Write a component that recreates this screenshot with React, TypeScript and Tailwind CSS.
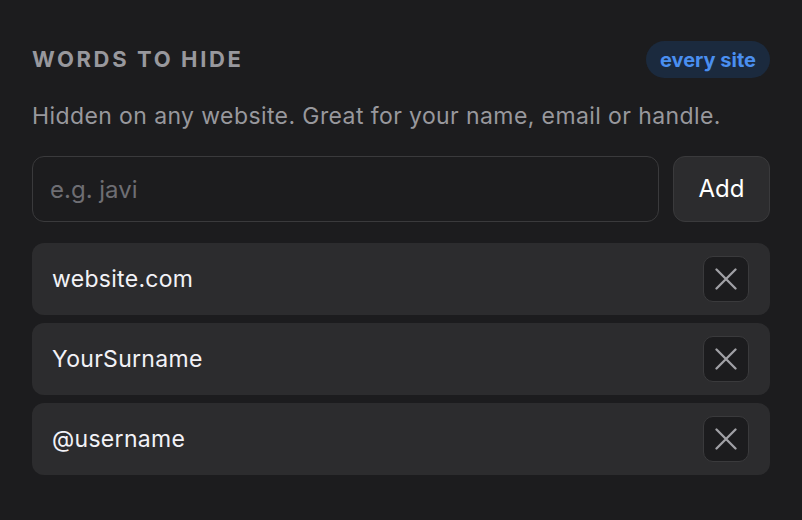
import React, { useState } from "react";

type Word = {
  id: number;
  text: string;
};

const initialWords: Word[] = [
  { id: 1, text: "website.com" },
  { id: 2, text: "YourSurname" },
  { id: 3, text: "@username" },
];

const CloseIcon = () => (
  <svg width="22" height="22" viewBox="0 0 22 22" fill="none">
    <path
      d="M1.5 1.5L20.5 20.5M20.5 1.5L1.5 20.5"
      stroke="#a1a1a6"
      strokeWidth="2.3"
      strokeLinecap="round"
    />
  </svg>
);

const App = () => {
  const [words, setWords] = useState<Word[]>(initialWords);
  const [draft, setDraft] = useState("");

  const addWord = () => {
    const text = draft.trim();
    if (!text) return;
    setWords([...words, { id: Date.now(), text }]);
    setDraft("");
  };

  const removeWord = (id: number) => {
    setWords(words.filter((w) => w.id !== id));
  };

  return (
    <main className="min-h-[520px] w-full bg-[#1c1c1e] px-8 pt-[41px] pb-10 font-['Inter','Liberation_Sans',sans-serif]">
      <div className="flex items-center justify-between">
        <h2 className="text-[22px] font-bold uppercase tracking-[0.12em] text-[#98989d]">
          Words to hide
        </h2>
        <span className="flex h-[37px] items-center rounded-full bg-[#1b2a3e] px-[14px] text-[20px] font-bold text-[#4a8ff0]">
          every site
        </span>
      </div>

      <p className="mt-[23px] text-[23px] leading-[30px] tracking-[0.4px] text-[#98989d]">
        Hidden on any website. Great for your name, email or handle.
      </p>

      <div className="mt-[25px] flex gap-[14px]">
        <input
          type="text"
          value={draft}
          onChange={(e) => setDraft(e.target.value)}
          onKeyDown={(e) => e.key === "Enter" && addWord()}
          placeholder="e.g. javi"
          className="h-[66px] flex-1 rounded-[12px] border-[1.5px] border-[#3a3a3c] bg-[#1c1c1e] px-[17px] text-[24px] text-white outline-none placeholder:text-[#6e6e73]"
        />
        <button
          onClick={addWord}
          className="h-[66px] w-[97px] rounded-[12px] border-[1.5px] border-[#3a3a3c] bg-[#2c2c2e] text-[24px] text-white"
        >
          Add
        </button>
      </div>

      <ul className="mt-[21px] flex flex-col gap-2">
        {words.map((w) => (
          <li
            key={w.id}
            className="flex h-[72px] items-center justify-between rounded-[12px] bg-[#2c2c2e] pl-5 pr-[21px]"
          >
            <span className="text-[23px] tracking-[0.3px] text-[#f2f2f7]">{w.text}</span>
            <button
              onClick={() => removeWord(w.id)}
              className="flex h-[46px] w-[46px] items-center justify-center rounded-[10px] border-[1.5px] border-[#3a3a3c] bg-[#1c1c1e]"
            >
              <CloseIcon />
            </button>
          </li>
        ))}
      </ul>
    </main>
  );
};

export default App;
